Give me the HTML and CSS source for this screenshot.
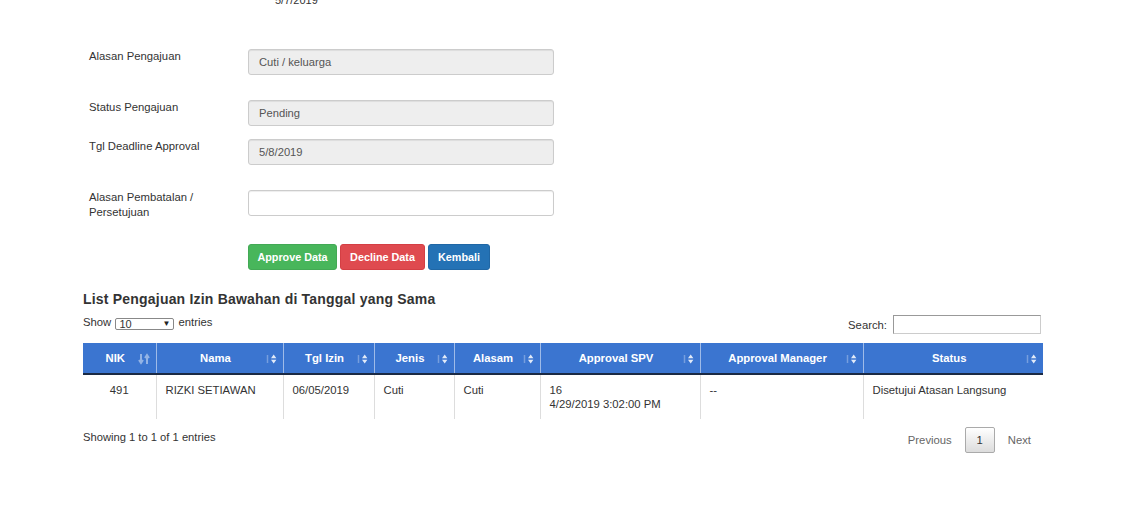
FILE: index.html
```html
<!DOCTYPE html>
<html>
<head>
<meta charset="utf-8">
<link rel="stylesheet" href="styles.css">
</head>
<body>
<div class="page">
  <div class="top-date">5/7/2019</div>

  <div class="form">
    <div class="form-row gap-l">
      <label class="lbl">Alasan Pengajuan</label>
      <div class="field ro">Cuti / keluarga</div>
    </div>
    <div class="form-row gap-s">
      <label class="lbl">Status Pengajuan</label>
      <div class="field ro">Pending</div>
    </div>
    <div class="form-row gap-l">
      <label class="lbl">Tgl Deadline Approval</label>
      <div class="field ro">5/8/2019</div>
    </div>
    <div class="form-row gap-b">
      <label class="lbl">Alasan Pembatalan /<br>Persetujuan</label>
      <div class="field"></div>
    </div>
    <div class="form-row">
      <span class="lbl"></span>
      <div class="btns">
        <button class="btn btn-green">Approve Data</button>
        <button class="btn btn-red">Decline Data</button>
        <button class="btn btn-blue">Kembali</button>
      </div>
    </div>
  </div>

  <h3 class="title">List Pengajuan Izin Bawahan di Tanggal yang Sama</h3>

  <div class="dt-top">
    <div class="length">Show <span class="sel"><span>10</span><span class="caret">&#9660;</span></span> entries</div>
    <div class="search">Search: <span class="search-box"></span></div>
  </div>

  <table class="dt">
    <colgroup>
      <col style="width:73px"><col style="width:127px"><col style="width:91px"><col style="width:80px">
      <col style="width:86px"><col style="width:160px"><col style="width:163px"><col style="width:180px">
    </colgroup>
    <thead>
      <tr>
        <th><span>NIK</span><svg class="si" viewBox="0 0 14 14"><path d="M4 2v8M2 8l2 3 2-3M10 12V4M8 6l2-3 2 3" stroke="rgba(255,255,255,0.45)" stroke-width="2" fill="none"/></svg></th>
        <th><span>Nama</span><svg class="si" viewBox="0 0 14 14"><path d="M3.5 3v8" stroke="rgba(255,255,255,0.3)" stroke-width="1.5"/><path d="M7 6.3 9.7 2.5 12.4 6.3Z M7 7.7 9.7 11.5 12.4 7.7Z" fill="rgba(255,255,255,0.85)"/></svg></th>
        <th><span>Tgl Izin</span><svg class="si" viewBox="0 0 14 14"><path d="M3.5 3v8" stroke="rgba(255,255,255,0.3)" stroke-width="1.5"/><path d="M7 6.3 9.7 2.5 12.4 6.3Z M7 7.7 9.7 11.5 12.4 7.7Z" fill="rgba(255,255,255,0.85)"/></svg></th>
        <th><span>Jenis</span><svg class="si" viewBox="0 0 14 14"><path d="M3.5 3v8" stroke="rgba(255,255,255,0.3)" stroke-width="1.5"/><path d="M7 6.3 9.7 2.5 12.4 6.3Z M7 7.7 9.7 11.5 12.4 7.7Z" fill="rgba(255,255,255,0.85)"/></svg></th>
        <th><span>Alasam</span><svg class="si" viewBox="0 0 14 14"><path d="M3.5 3v8" stroke="rgba(255,255,255,0.3)" stroke-width="1.5"/><path d="M7 6.3 9.7 2.5 12.4 6.3Z M7 7.7 9.7 11.5 12.4 7.7Z" fill="rgba(255,255,255,0.85)"/></svg></th>
        <th><span>Approval SPV</span><svg class="si" viewBox="0 0 14 14"><path d="M3.5 3v8" stroke="rgba(255,255,255,0.3)" stroke-width="1.5"/><path d="M7 6.3 9.7 2.5 12.4 6.3Z M7 7.7 9.7 11.5 12.4 7.7Z" fill="rgba(255,255,255,0.85)"/></svg></th>
        <th><span>Approval Manager</span><svg class="si" viewBox="0 0 14 14"><path d="M3.5 3v8" stroke="rgba(255,255,255,0.3)" stroke-width="1.5"/><path d="M7 6.3 9.7 2.5 12.4 6.3Z M7 7.7 9.7 11.5 12.4 7.7Z" fill="rgba(255,255,255,0.85)"/></svg></th>
        <th><span>Status</span><svg class="si" viewBox="0 0 14 14"><path d="M3.5 3v8" stroke="rgba(255,255,255,0.3)" stroke-width="1.5"/><path d="M7 6.3 9.7 2.5 12.4 6.3Z M7 7.7 9.7 11.5 12.4 7.7Z" fill="rgba(255,255,255,0.85)"/></svg></th>
      </tr>
    </thead>
    <tbody>
      <tr>
        <td class="c">491</td>
        <td>RIZKI SETIAWAN</td>
        <td>06/05/2019</td>
        <td>Cuti</td>
        <td>Cuti</td>
        <td>16<br>4/29/2019 3:02:00 PM</td>
        <td>--</td>
        <td>Disetujui Atasan Langsung</td>
      </tr>
    </tbody>
  </table>

  <div class="dt-bottom">
    <div class="info">Showing 1 to 1 of 1 entries</div>
    <div class="paging">
      <span class="pg">Previous</span>
      <span class="pg cur">1</span>
      <span class="pg">Next</span>
    </div>
  </div>
</div>
</body>
</html>
```

FILE: styles.css
```css
* { box-sizing: border-box; }
html, body { margin: 0; padding: 0; background: #fff; }
body {
  font-family: "Liberation Sans", Arial, sans-serif;
  font-size: 11.3px;
  color: #333;
}
.page {
  width: 960px;
  margin-left: 83px;
}
.top-date {
  margin-top: -7px;
  margin-left: 192px;
  font-size: 11px;
  line-height: 14px;
  color: #333;
  height: 14px;
}
.form {
  margin-top: 42px;
}
.form-row {
  display: flex;
  align-items: flex-start;
}
.gap-l { margin-bottom: 25px; }
.gap-s { margin-bottom: 13px; }
.gap-b { margin-bottom: 24px; }
.lbl {
  width: 165px;
  padding-left: 6px;
  line-height: 15px;
  color: #333;
  font-size: 11.3px;
}
.field {
  width: 306px;
  height: 26px;
  border: 1px solid #ccc;
  border-radius: 3px;
  background: #fff;
  padding: 0 10px;
  line-height: 24px;
  font-size: 11.2px;
  color: #555;
  box-shadow: inset 0 1px 1px rgba(0,0,0,0.075);
}
.field.ro { background: #eee; }
.btns { display: flex; gap: 3px; }
.btn {
  height: 26px;
  border: 1px solid transparent;
  border-radius: 3px;
  color: #fff;
  font-family: "Liberation Sans", Arial, sans-serif;
  font-weight: bold;
  font-size: 10.8px;
  padding: 0;
  white-space: nowrap;
  text-align: center;
  line-height: 24px;
}
.btn-green { background: #48b65b; border-color: #43a955; width: 89px; }
.btn-red { background: #df4a4f; border-color: #d43f44; width: 85px; }
.btn-blue { background: #2472b5; border-color: #2067a5; width: 62px; }

.title {
  margin: 20px 0 0;
  font-size: 14px;
  font-weight: bold;
  letter-spacing: 0.2px;
  line-height: 18px;
  color: #333;
}
.dt-top {
  display: flex;
  justify-content: space-between;
  align-items: flex-start;
  margin-top: 5px;
  height: 30px;
}
.length {
  line-height: 14px;
  font-size: 11.3px;
  margin-top: 2px;
}
.sel {
  display: inline-flex;
  justify-content: space-between;
  align-items: center;
  width: 59px;
  height: 12px;
  border: 1px solid #888;
  border-radius: 2px;
  font-size: 11px;
  line-height: 10px;
  padding: 0 3px 0 3px;
  vertical-align: -2px;
  margin: 0 1px;
}
.caret { font-size: 8px; color: #222; }
.search {
  display: flex;
  align-items: center;
  font-size: 11.3px;
  margin-top: 2px;
  margin-right: 2px;
}
.search-box {
  display: inline-block;
  width: 148px;
  height: 19px;
  margin-left: 6px;
  border: 1px solid #ccc;
  border-top-color: #999;
  border-left-color: #999;
  background: #fff;
}

table.dt {
  width: 960px;
  border-collapse: collapse;
  table-layout: fixed;
}
table.dt th {
  background: #3b75d0;
  color: #fff;
  font-weight: bold;
  font-size: 11.3px;
  height: 31px;
  padding: 0 18px 0 10px;
  text-align: center;
  position: relative;
  border-left: 1px solid #9fbbe8;
  border-bottom: 2px solid #1b2a44;
  vertical-align: middle;
}
table.dt th:first-child { border-left: none; }
.si {
  position: absolute;
  right: 5px;
  top: 9px;
  width: 14px;
  height: 14px;
}
table.dt td {
  padding: 8px 9px 8px 9px;
  line-height: 14px;
  height: 44px;
  vertical-align: top;
  border-left: 1px solid #ddd;
  font-size: 11.3px;
  color: #333;
}
table.dt td:first-child { border-left: none; }
table.dt td.c { text-align: center; }

.dt-bottom {
  display: flex;
  justify-content: space-between;
  align-items: flex-start;
  margin-top: 11px;
}
.info { font-size: 11.2px; line-height: 14px; }
.paging {
  display: flex;
  align-items: center;
  margin-top: -3px;
  margin-right: 2px;
}
.pg {
  color: #666;
  font-size: 11.3px;
  padding: 0 10px;
  line-height: 26px;
}
.pg.cur {
  color: #333;
  width: 30px;
  height: 26px;
  padding: 0;
  text-align: center;
  border: 1px solid #aaa;
  border-radius: 2px;
  background: linear-gradient(#fff, #dcdcdc);
  line-height: 24px;
  margin: 0 3px;
}
```
